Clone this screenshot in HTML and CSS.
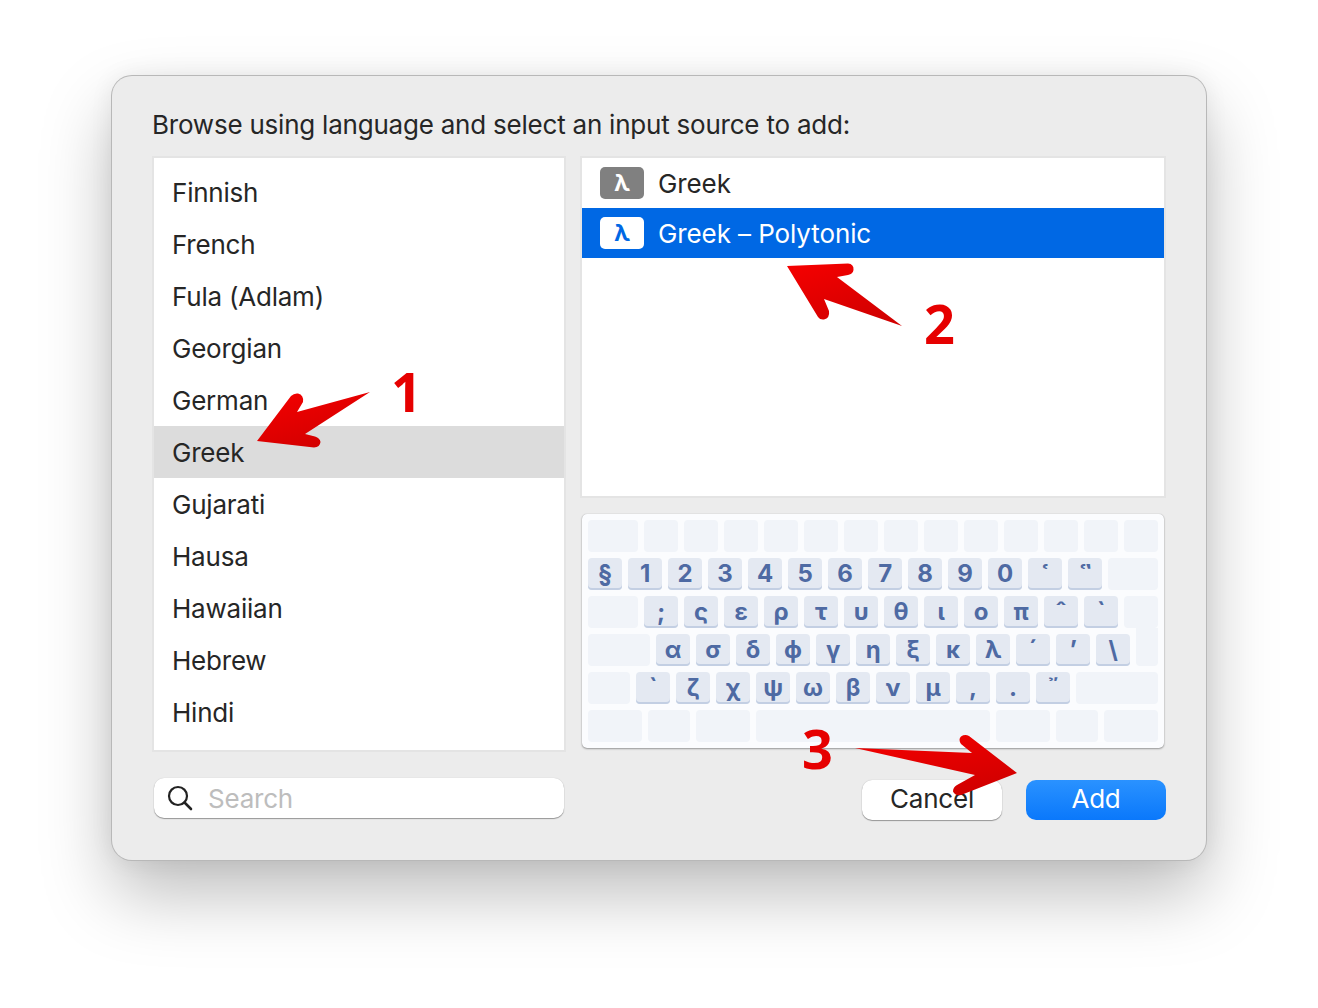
FILE: index.html
```html
<!DOCTYPE html>
<html lang="en">
<head>
    <title>Add Input Source</title>
    <link rel="stylesheet" href="styles.css">
</head>
<body>
    <div class="dialog">
        <div class="title">Browse using language and select an input source to add:</div>
        <div class="columns">
            <div class="column">
                <div class="panel languages">
                    <div class="lang">Finnish</div>
                    <div class="lang">French</div>
                    <div class="lang">Fula (Adlam)</div>
                    <div class="lang">Georgian</div>
                    <div class="lang">German</div>
                    <div class="lang selected">Greek</div>
                    <div class="lang">Gujarati</div>
                    <div class="lang">Hausa</div>
                    <div class="lang">Hawaiian</div>
                    <div class="lang">Hebrew</div>
                    <div class="lang">Hindi</div>
                </div>
                <div class="search">
                    <svg class="search-icon" width="28" height="28" viewBox="0 0 28 28">
                        <circle cx="12" cy="12" r="9" fill="none" stroke="#222" stroke-width="2.2"/>
                        <path d="M18.5 18.5L25 25" fill="none" stroke="#222" stroke-width="2.6" stroke-linecap="round"/>
                    </svg>
                    <span class="placeholder">Search</span>
                </div>
            </div>
            <div class="column">
                <div class="panel sources">
                    <div class="source"><span class="badge">λ</span>Greek</div>
                    <div class="source active"><span class="badge">λ</span>Greek – Polytonic</div>
                </div>
                <div class="keyboard">
                    <div class="kb-row">
                        <div class="key blank w50"></div>
                        <div class="key blank"></div><div class="key blank"></div><div class="key blank"></div><div class="key blank"></div>
                        <div class="key blank"></div><div class="key blank"></div><div class="key blank"></div><div class="key blank"></div>
                        <div class="key blank"></div><div class="key blank"></div><div class="key blank"></div><div class="key blank"></div>
                        <div class="key blank"></div>
                    </div>
                    <div class="kb-row">
                        <div class="key">§</div><div class="key">1</div><div class="key">2</div><div class="key">3</div>
                        <div class="key">4</div><div class="key">5</div><div class="key">6</div><div class="key">7</div>
                        <div class="key">8</div><div class="key">9</div><div class="key">0</div>
                        <div class="key mark-lg">῾</div><div class="key mark-lg">῝</div>
                        <div class="key blank w50"></div>
                    </div>
                    <div class="kb-row">
                        <div class="key blank w50"></div>
                        <div class="key">;</div><div class="key">ς</div><div class="key">ε</div><div class="key">ρ</div>
                        <div class="key">τ</div><div class="key">υ</div><div class="key">θ</div><div class="key">ι</div>
                        <div class="key">ο</div><div class="key">π</div>
                        <div class="key">ˆ</div><div class="key">`</div>
                        <div class="key blank"></div>
                    </div>
                    <div class="kb-row">
                        <div class="key blank w62"></div>
                        <div class="key">α</div><div class="key">σ</div><div class="key">δ</div><div class="key">ϕ</div>
                        <div class="key">γ</div><div class="key">η</div><div class="key">ξ</div><div class="key">κ</div>
                        <div class="key">λ</div>
                        <div class="key">´</div><div class="key">’</div><div class="key">\</div>
                        <div class="key blank enter"></div>
                    </div>
                    <div class="kb-row">
                        <div class="key blank w42"></div>
                        <div class="key">`</div><div class="key">ζ</div><div class="key">χ</div><div class="key">ψ</div>
                        <div class="key">ω</div><div class="key">β</div><div class="key">ν</div><div class="key">μ</div>
                        <div class="key">,</div><div class="key">.</div><div class="key">῎</div>
                        <div class="key blank w82"></div>
                    </div>
                    <div class="kb-row">
                        <div class="key blank w54"></div><div class="key blank w42"></div><div class="key blank w54"></div>
                        <div class="key blank w234"></div>
                        <div class="key blank w54"></div><div class="key blank w42"></div><div class="key blank w54"></div>
                    </div>
                </div>
                <div class="actions">
                    <div class="btn cancel">Cancel</div>
                    <div class="btn add">Add</div>
                </div>
            </div>
        </div>
    </div>

    <!-- red annotations drawn over the dialog -->
    <svg class="arrows" width="1318" height="1008" viewBox="0 0 1318 1008">
        <defs>
            <linearGradient id="red" x1="0" y1="0" x2="0.6" y2="1">
                <stop offset="0" stop-color="#f60000"/>
                <stop offset="1" stop-color="#d20000"/>
            </linearGradient>
        </defs>
        <path fill="url(#red)" d="M370 392L297 412L303 402Q304 395 298 393.500Q294 393 291 396L257 441L314 447.500Q320 447 320.500 442Q320 438 315 436.500L305 434Z"/>
        <path fill="url(#red)" d="M787 266L848 263.500Q854 264 853.500 270Q853 274 848 275L837 277L902 326L824 299L829 311Q830 318 824 319.500Q820 320 818 317Z"/>
        <path fill="url(#red)" d="M855 748L972 753L961 744Q958 739 961 736.500Q965 734 969 736L1017 773L961 795Q955 796 953 791.500Q953 787 957 785L975 775Z"/>
    </svg>
    <span class="num num-1">1</span>
    <span class="num num-2">2</span>
    <span class="num num-3">3</span>
</body>
</html>
```

FILE: styles.css
```css
* {
    box-sizing: border-box;
}
body {
    margin: 0;
    padding: 76px 112px 0;
    height: 1008px;
    overflow: hidden;
    background-color: white;
    font-family: Inter, Roboto, "Liberation Sans", sans-serif;
    letter-spacing: -0.22px;
    color: #262626;
}
.dialog {
    width: 1094px;
    height: 784px;
    padding: 34px 40px 0;
    background-color: #ececec;
    border-radius: 20px;
    box-shadow: 0 0 0 1px #b8b8b8, 0 34px 70px rgba(0, 0, 0, 0.26), 0 0 24px rgba(0, 0, 0, 0.07);
}
.title {
    height: 30px;
    margin-bottom: 16px;
    font-size: 26px;
    line-height: 30px;
    white-space: nowrap;
}
.columns {
    display: grid;
    grid-template-columns: 414px 586px;
    gap: 14px;
}
.panel {
    background-color: white;
    border: 2px solid #e4e4e4;
}
.languages {
    height: 596px;
    padding-top: 8px;
}
.lang {
    height: 52px;
    padding-left: 18px;
    font-size: 26px;
    line-height: 54px;
}
.selected {
    background-color: #dcdcdc;
}
.search {
    display: flex;
    align-items: center;
    height: 40px;
    margin: 26px 2px 0;
    padding-left: 12px;
    background-color: white;
    border-radius: 10px;
    box-shadow: 0 1px 1px rgba(0, 0, 0, 0.35), 0 0 1px rgba(0, 0, 0, 0.2);
}
.search-icon {
    margin-right: 14px;
}
.placeholder {
    font-size: 26px;
    color: #bdbdbd;
}
.sources {
    height: 342px;
}
.source {
    display: flex;
    align-items: center;
    height: 50px;
    padding-left: 18px;
    font-size: 26px;
    letter-spacing: -0.1px;
}
.badge {
    display: flex;
    align-items: center;
    justify-content: center;
    width: 44px;
    height: 32px;
    margin-right: 14px;
    background-color: #808080;
    border-radius: 5px;
    color: white;
    font-size: 23px;
    font-weight: 700;
}
.active {
    background-color: #0068e4;
    color: white;
}
.active .badge {
    background-color: white;
    color: #0068e4;
}
.keyboard {
    display: flex;
    flex-direction: column;
    gap: 6px;
    height: 234px;
    margin: 16px 2px 0;
    padding: 6px;
    background-color: #fbfcfe;
    border-radius: 5px;
    box-shadow: 0 1px 2px rgba(0, 0, 0, 0.35), 0 0 1px rgba(0, 0, 0, 0.25);
}
.kb-row {
    display: flex;
    gap: 6px;
    height: 32px;
}
.key {
    display: flex;
    align-items: center;
    justify-content: center;
    flex: none;
    width: 34px;
    height: 32px;
    background-color: #e4e9f2;
    border-radius: 4px;
    box-shadow: inset 0 -2px 0 #c3cfe3;
    color: #4e6aa3;
    font-size: 24px;
    font-weight: 700;
    line-height: 1;
}
.blank {
    background-color: #f1f4f9;
    box-shadow: none;
}
.mark-lg {
    padding-top: 4px;
    font-size: 30px;
}
.w42 { width: 42px; }
.w50 { width: 50px; }
.w54 { width: 54px; }
.w62 { width: 62px; }
.w82 { width: 82px; }
.w234 { width: 234px; }
.enter {
    width: 22px;
    height: 38px;
    margin-top: -6px;
    border-radius: 0 0 4px 4px;
}
.actions {
    display: flex;
    justify-content: flex-end;
    gap: 24px;
    margin-top: 32px;
}
.btn {
    width: 140px;
    height: 40px;
    border-radius: 10px;
    font-size: 26px;
    line-height: 38px;
    text-align: center;
}
.cancel {
    background-color: white;
    box-shadow: 0 1px 1px rgba(0, 0, 0, 0.35), 0 0 1px rgba(0, 0, 0, 0.25);
}
.add {
    background-image: linear-gradient(#2a92ff, #0a78fb);
    color: white;
}
.arrows {
    position: absolute;
    left: 0;
    top: 0;
}
.num {
    position: absolute;
    color: #e60000;
    font-family: "Open Sans", sans-serif;
    font-size: 54px;
    font-weight: 700;
    line-height: 56px;
}
.num-1 { left: 391px; top: 363px; }
.num-2 { left: 924px; top: 295px; }
.num-3 { left: 802px; top: 720px; }
```
